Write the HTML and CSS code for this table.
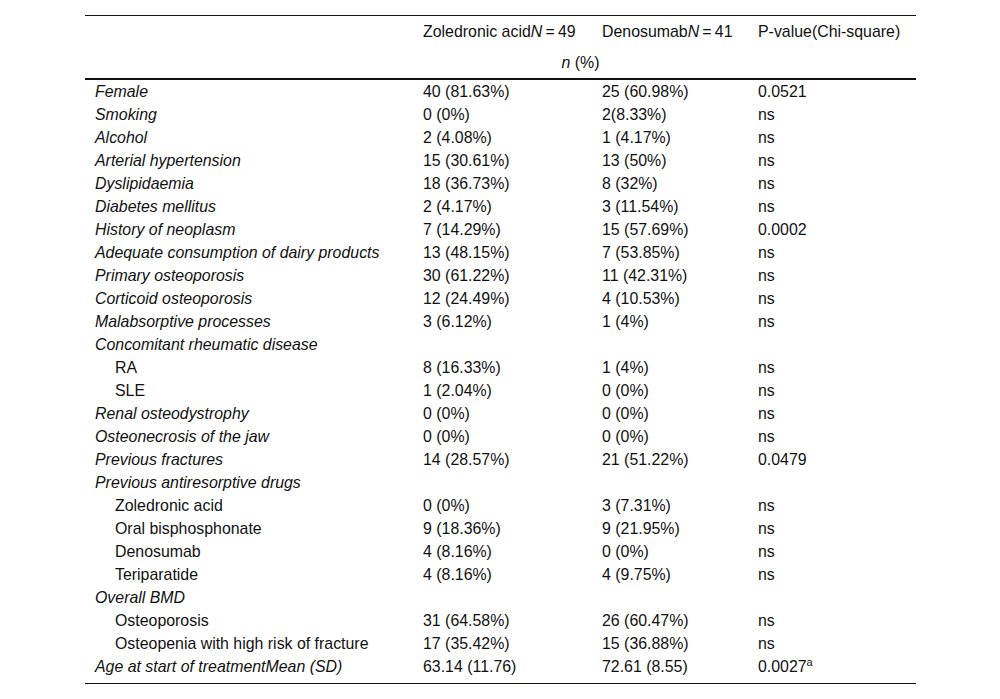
FILE: index.html
```html
<!DOCTYPE html>
<html>
<head>
<meta charset="utf-8">
<link rel="stylesheet" href="styles.css">
</head>
<body>
<div class="wrap">
<table class="tbl">
  <colgroup>
    <col class="c1"><col class="c2"><col class="c3"><col class="c4">
  </colgroup>
  <thead>
    <tr class="h1">
      <th></th>
      <th>Zoledronic acid<i>N</i>&#8201;=&#8201;49</th>
      <th>Denosumab<i>N</i>&#8201;=&#8201;41</th>
      <th>P-value(Chi-square)</th>
    </tr>
    <tr class="h2">
      <th></th>
      <th colspan="2" class="center"><i>n</i> (%)</th>
      <th></th>
    </tr>
  </thead>
  <tbody>
    <tr><td class="lab">Female</td><td>40 (81.63%)</td><td>25 (60.98%)</td><td>0.0521</td></tr>
    <tr><td class="lab">Smoking</td><td>0 (0%)</td><td>2(8.33%)</td><td>ns</td></tr>
    <tr><td class="lab">Alcohol</td><td>2 (4.08%)</td><td>1 (4.17%)</td><td>ns</td></tr>
    <tr><td class="lab">Arterial hypertension</td><td>15 (30.61%)</td><td>13 (50%)</td><td>ns</td></tr>
    <tr><td class="lab">Dyslipidaemia</td><td>18 (36.73%)</td><td>8 (32%)</td><td>ns</td></tr>
    <tr><td class="lab">Diabetes mellitus</td><td>2 (4.17%)</td><td>3 (11.54%)</td><td>ns</td></tr>
    <tr><td class="lab">History of neoplasm</td><td>7 (14.29%)</td><td>15 (57.69%)</td><td>0.0002</td></tr>
    <tr><td class="lab">Adequate consumption of dairy products</td><td>13 (48.15%)</td><td>7 (53.85%)</td><td>ns</td></tr>
    <tr><td class="lab">Primary osteoporosis</td><td>30 (61.22%)</td><td>11 (42.31%)</td><td>ns</td></tr>
    <tr><td class="lab">Corticoid osteoporosis</td><td>12 (24.49%)</td><td>4 (10.53%)</td><td>ns</td></tr>
    <tr><td class="lab">Malabsorptive processes</td><td>3 (6.12%)</td><td>1 (4%)</td><td>ns</td></tr>
    <tr><td class="lab">Concomitant rheumatic disease</td><td></td><td></td><td></td></tr>
    <tr><td class="sub">RA</td><td>8 (16.33%)</td><td>1 (4%)</td><td>ns</td></tr>
    <tr><td class="sub">SLE</td><td>1 (2.04%)</td><td>0 (0%)</td><td>ns</td></tr>
    <tr><td class="lab">Renal osteodystrophy</td><td>0 (0%)</td><td>0 (0%)</td><td>ns</td></tr>
    <tr><td class="lab">Osteonecrosis of the jaw</td><td>0 (0%)</td><td>0 (0%)</td><td>ns</td></tr>
    <tr><td class="lab">Previous fractures</td><td>14 (28.57%)</td><td>21 (51.22%)</td><td>0.0479</td></tr>
    <tr><td class="lab">Previous antiresorptive drugs</td><td></td><td></td><td></td></tr>
    <tr><td class="sub">Zoledronic acid</td><td>0 (0%)</td><td>3 (7.31%)</td><td>ns</td></tr>
    <tr><td class="sub">Oral bisphosphonate</td><td>9 (18.36%)</td><td>9 (21.95%)</td><td>ns</td></tr>
    <tr><td class="sub">Denosumab</td><td>4 (8.16%)</td><td>0 (0%)</td><td>ns</td></tr>
    <tr><td class="sub">Teriparatide</td><td>4 (8.16%)</td><td>4 (9.75%)</td><td>ns</td></tr>
    <tr><td class="lab">Overall BMD</td><td></td><td></td><td></td></tr>
    <tr><td class="sub">Osteoporosis</td><td>31 (64.58%)</td><td>26 (60.47%)</td><td>ns</td></tr>
    <tr><td class="sub">Osteopenia with high risk of fracture</td><td>17 (35.42%)</td><td>15 (36.88%)</td><td>ns</td></tr>
    <tr class="last"><td class="lab">Age at start of treatmentMean (SD)</td><td>63.14 (11.76)</td><td>72.61 (8.55)</td><td>0.0027<sup>a</sup></td></tr>
  </tbody>
</table>
</div>
</body>
</html>
```

FILE: styles.css
```css
html, body {
  margin: 0;
  padding: 0;
  background: #fff;
}
.wrap {
  padding-top: 15px;
}
.tbl {
  width: 831px;
  margin: 0 0 0 85px;
  border-collapse: collapse;
  table-layout: fixed;
  font-family: "Liberation Sans", Arial, sans-serif;
  font-size: 15.9px;
  color: #111;
  border-top: 1px solid #111;
  border-bottom: 1px solid #111;
}
.c1 { width: 328px; }
.c2 { width: 179px; }
.c3 { width: 156px; }
.c4 { width: 168px; }
.tbl th {
  font-weight: normal;
  text-align: left;
  padding: 0 10px;
  white-space: nowrap;
}
.tbl .h1 th {
  height: 31px;
  vertical-align: middle;
}
.tbl .h2 th {
  height: 31px;
  border-bottom: 2px solid #111;
  vertical-align: middle;
}
.tbl th.center {
  text-align: center;
}
.tbl td {
  height: 23px;
  padding: 0 10px;
  white-space: nowrap;
  vertical-align: middle;
}
.tbl td.lab {
  font-style: italic;
}
.tbl td.sub {
  padding-left: 30px;
}
.tbl tr.last td {
  height: 23px;
  padding-bottom: 5px;
}
.tbl sup {
  font-size: 11px;
  vertical-align: top;
  position: relative;
  top: -2px;
}
```
